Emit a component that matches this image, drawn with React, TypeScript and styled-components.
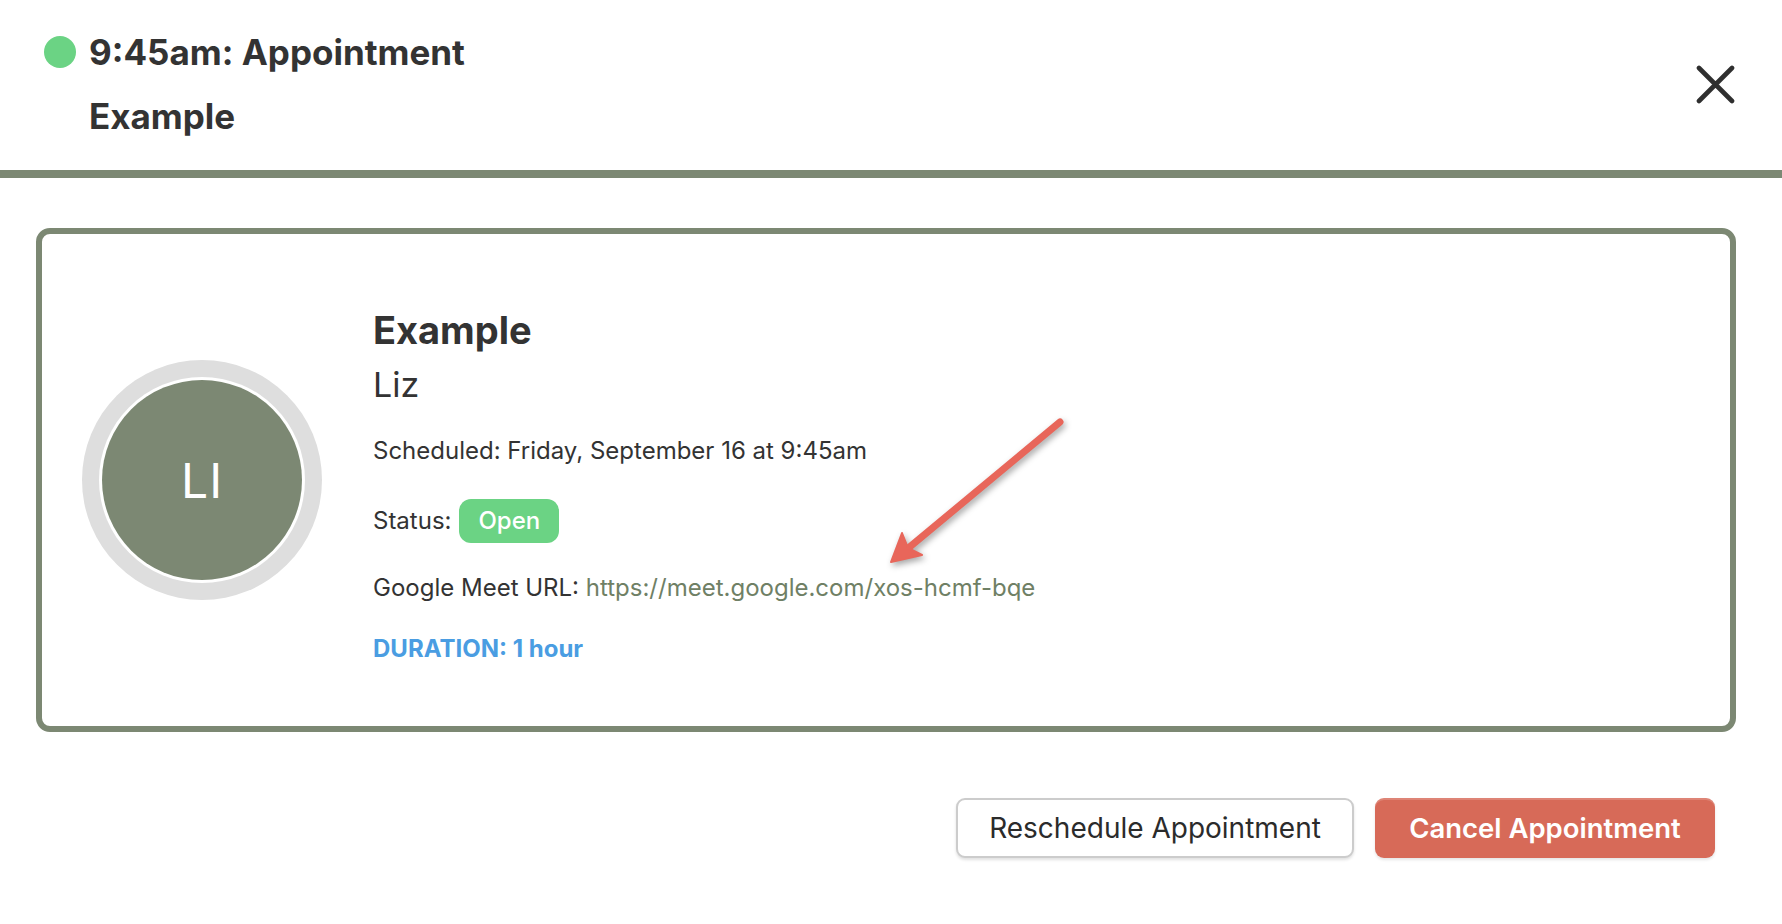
import React from "react";
import styled, { createGlobalStyle } from "styled-components";

const GlobalStyle = createGlobalStyle`
  html, body { margin: 0; padding: 0; background: #ffffff; }
  body { font-family: Inter, "Noto Sans", "Liberation Sans", sans-serif; color: #333333; }
  * { box-sizing: border-box; }
`;

const Page = styled.div`
  position: relative;
  width: 1782px;
  min-height: 924px;
  background: #ffffff;
`;

const Header = styled.header`
  display: flex;
  align-items: center;
  justify-content: space-between;
  padding: 20px 47px 22px 44px;
  border-bottom: 8px solid #7c8873;
`;

const TitleWrap = styled.div`
  display: flex;
  align-items: flex-start;
  gap: 13px;
`;

const Dot = styled.span`
  width: 32px;
  height: 32px;
  border-radius: 50%;
  background: #6bd384;
  margin-top: 16px;
  flex: none;
`;

const Title = styled.h1`
  margin: 0;
  max-width: 420px;
  font-size: 35px;
  font-weight: 700;
  line-height: 64px;
  color: #333333;
`;

const CloseButton = styled.button`
  width: 39px;
  height: 39px;
  padding: 0;
  border: none;
  background: transparent;
  display: flex;
  align-items: center;
  justify-content: center;
  cursor: pointer;
`;

const Body = styled.main`
  padding: 50px 46px 0 36px;
`;

const Card = styled.section`
  display: flex;
  align-items: center;
  border: 6px solid #7c8873;
  border-radius: 14px;
  padding: 0 0 0 40px;
`;

const AvatarRing = styled.div`
  flex: none;
  width: 240px;
  height: 240px;
  border-radius: 50%;
  background: #dedede;
  display: flex;
  align-items: center;
  justify-content: center;
`;

const AvatarInner = styled.div`
  width: 206px;
  height: 206px;
  border-radius: 50%;
  background: #ffffff;
  display: flex;
  align-items: center;
  justify-content: center;
`;

const Avatar = styled.div`
  width: 200px;
  height: 200px;
  border-radius: 50%;
  background: #7c8873;
  color: #ffffff;
  display: flex;
  align-items: center;
  justify-content: center;
  font-size: 48px;
  font-weight: 400;
  letter-spacing: 1px;
`;

const Details = styled.div`
  display: flex;
  flex-direction: column;
  margin-left: 51px;
  padding: 74px 0 61px;
`;

const Name = styled.h2`
  margin: 0;
  font-size: 38px;
  font-weight: 700;
  line-height: 44px;
  color: #333333;
`;

const Person = styled.div`
  margin-top: 11px;
  font-size: 34px;
  font-weight: 400;
  line-height: 44px;
  color: #333333;
`;

const InfoLine = styled.div<{ $gap: number }>`
  display: flex;
  align-items: center;
  margin-top: ${(p) => p.$gap}px;
  font-size: 24px;
  line-height: 32px;
  color: #333333;
  white-space: pre;
`;

const Badge = styled.span`
  display: inline-flex;
  align-items: center;
  justify-content: center;
  height: 44px;
  padding: 0 19px;
  margin-left: 8px;
  border-radius: 12px;
  background: #6bd384;
  color: #ffffff;
  font-size: 24px;
  font-weight: 500;
`;

const MeetLink = styled.a`
  color: #6f8065;
  text-decoration: none;
`;

const Duration = styled.div`
  margin-top: 29px;
  font-size: 24px;
  font-weight: 700;
  line-height: 32px;
  color: #4a9de2;
`;

const Footer = styled.footer`
  display: flex;
  justify-content: flex-end;
  gap: 21px;
  padding: 66px 67px 0 0;
`;

const SecondaryButton = styled.button`
  height: 60px;
  width: 398px;
  border: 2px solid #cccccc;
  border-radius: 9px;
  background: #ffffff;
  box-shadow: 0 2px 3px rgba(0, 0, 0, 0.12);
  font-family: inherit;
  font-size: 28px;
  font-weight: 400;
  color: #2b2b2b;
  cursor: pointer;
`;

const DangerButton = styled.button`
  height: 60px;
  width: 340px;
  border: none;
  border-radius: 9px;
  background: #d76a58;
  box-shadow: inset 0 2px 0 rgba(255, 255, 255, 0.18), 0 2px 3px rgba(0, 0, 0, 0.1);
  font-family: inherit;
  font-size: 27.5px;
  font-weight: 600;
  color: #ffffff;
  cursor: pointer;
`;

const Annotation = styled.svg`
  position: absolute;
  left: 870px;
  top: 400px;
  width: 220px;
  height: 190px;
  overflow: visible;
  pointer-events: none;
  filter: drop-shadow(2px 3px 3px rgba(0, 0, 0, 0.35));
`;

export default function App() {
  return (
    <Page>
      <GlobalStyle />
      <Header>
        <TitleWrap>
          <Dot />
          <Title>9:45am: Appointment Example</Title>
        </TitleWrap>
        <CloseButton aria-label="Close">
          <svg width="39" height="39" viewBox="0 0 39 39">
            <path d="M3 3 L36 36 M36 3 L3 36" stroke="#2f2f2f" strokeWidth="4.6" strokeLinecap="round" />
          </svg>
        </CloseButton>
      </Header>
      <Body>
        <Card>
          <AvatarRing>
            <AvatarInner>
              <Avatar>LI</Avatar>
            </AvatarInner>
          </AvatarRing>
          <Details>
            <Name>Example</Name>
            <Person>Liz</Person>
            <InfoLine $gap={28}>Scheduled: Friday, September 16 at 9:45am</InfoLine>
            <InfoLine $gap={32}>
              Status:<Badge>Open</Badge>
            </InfoLine>
            <InfoLine $gap={29}>
              Google Meet URL: <MeetLink href="#">https://meet.google.com/xos-hcmf-bqe</MeetLink>
            </InfoLine>
            <Duration>DURATION: 1 hour</Duration>
          </Details>
        </Card>
      </Body>
      <Footer>
        <SecondaryButton>Reschedule Appointment</SecondaryButton>
        <DangerButton>Cancel Appointment</DangerButton>
      </Footer>
      <Annotation viewBox="0 0 220 190">
        <line x1="190" y1="22" x2="36" y2="150" stroke="#e8665a" strokeWidth="7" strokeLinecap="round" />
        <path d="M21 162 L32 133 L38 148 L52 155 Z" fill="#e8665a" stroke="#e8665a" strokeWidth="2" strokeLinejoin="round" />
      </Annotation>
    </Page>
  );
}
